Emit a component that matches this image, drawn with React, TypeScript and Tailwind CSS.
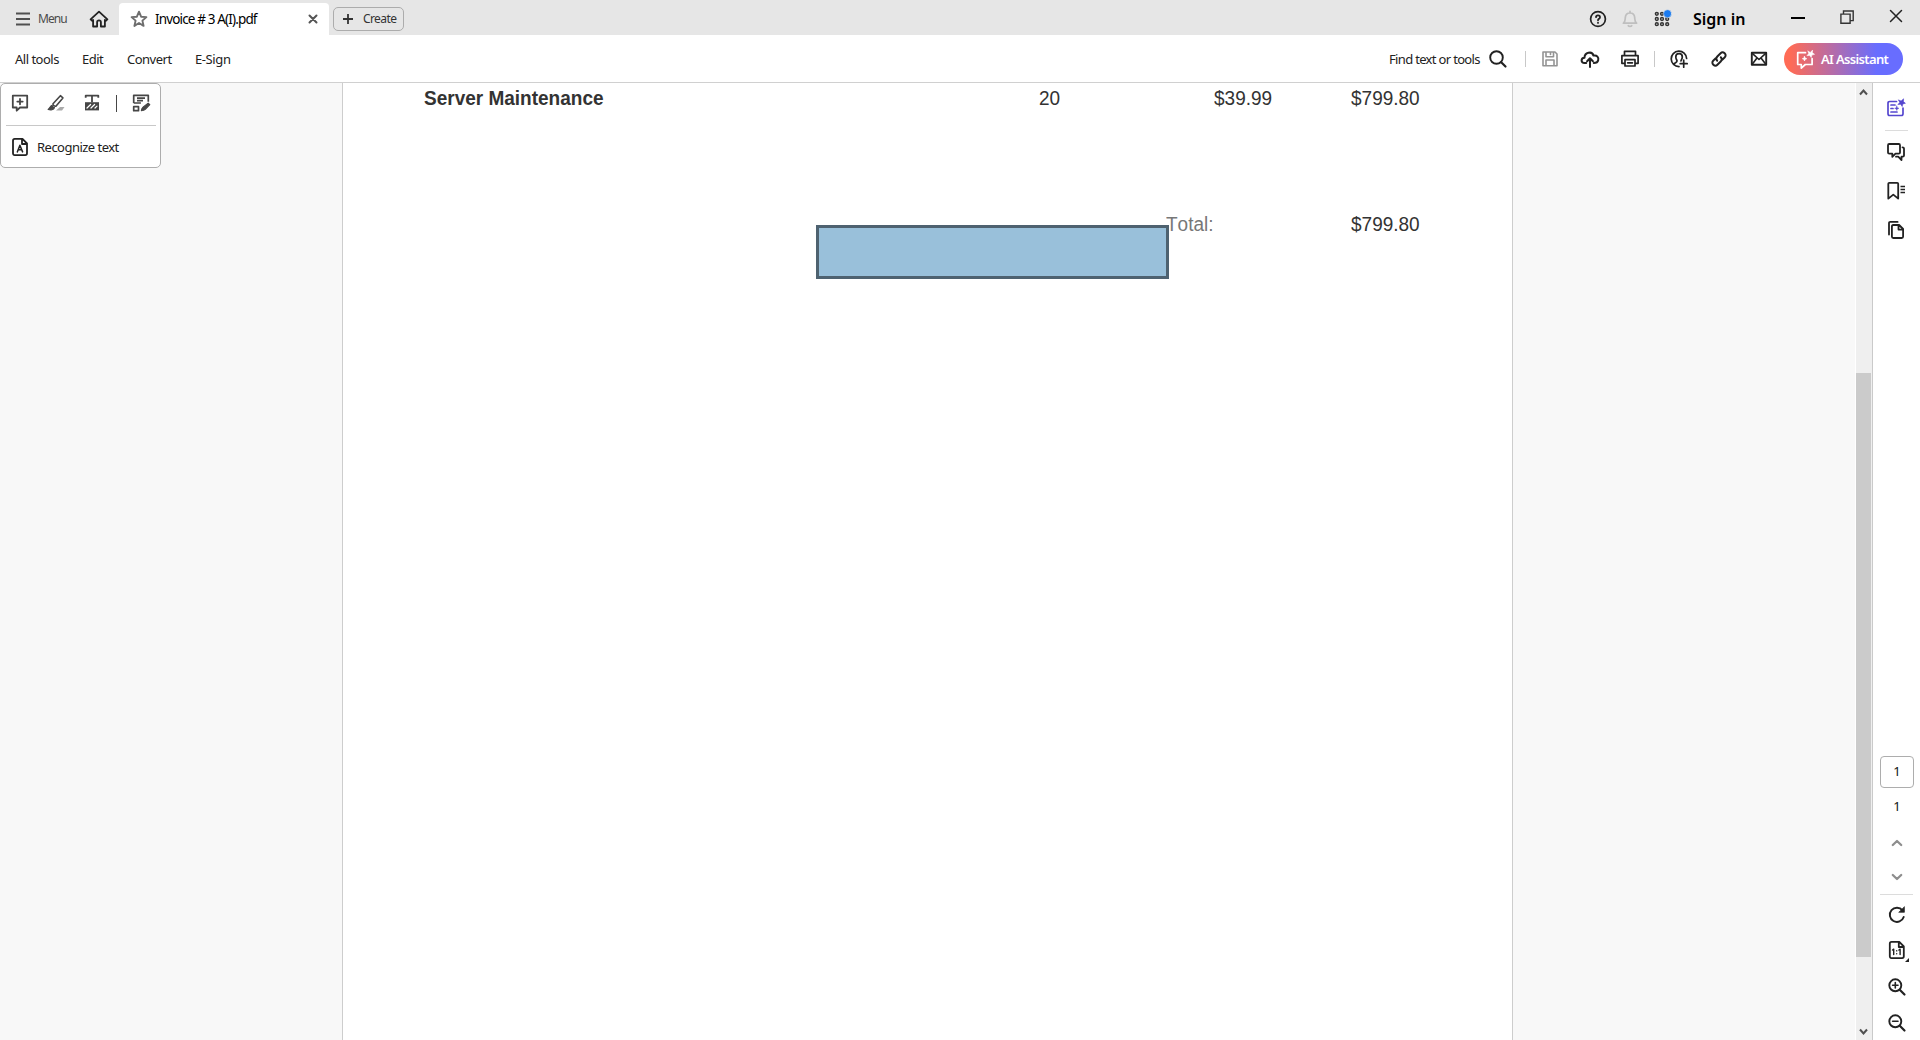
import React from 'react';

type IconProps = { children: React.ReactNode; className?: string };

/* 20px icon canvas, stroked with the current colour */
function Icon({ children, className = '' }: IconProps) {
  return (
    <svg
      viewBox="0 0 20 20"
      width="20"
      height="20"
      fill="none"
      stroke="currentColor"
      strokeWidth="1.7"
      strokeLinecap="round"
      strokeLinejoin="round"
      className={`block shrink-0 ${className}`}
    >
      {children}
    </svg>
  );
}

function TitleBar() {
  return (
    <header className="flex h-[35px] shrink-0 bg-[#e6e6e6]">
      <div className="flex items-center pt-[3px]">
        <Icon className="ml-[13px] text-[#505050]">
          <path d="M3 4.5h14M3 10h14M3 15.5h14" strokeLinecap="butt" strokeWidth="2" />
        </Icon>
        <span className="ml-[5px] w-[51px] text-[12px] leading-4 tracking-[-0.95px] text-[#4b4b4b]">Menu</span>
        <Icon className="-mt-px text-[#222]">
          <path d="M1.6 10.3 10 2.6l8.4 7.7-1.6 1.4-.9-.8v6.6h-4v-4.2a1.9 1.9 0 0 0-3.8 0v4.2h-4v-6.6l-.9.8z" strokeWidth="1.8" />
        </Icon>
      </div>
      <div className="mt-[3px] ml-[10px] flex h-8 w-[210px] items-center rounded-t-[4px] bg-white">
        <Icon className="ml-[10px] text-[#6e6e6e]">
          <path d="m10 2.7 2.1 5 5.3.4-4 3.5 1.2 5.3-4.6-2.9-4.6 2.9 1.2-5.3-4-3.5 5.3-.4z" strokeWidth="1.9" />
        </Icon>
        <span className="ml-[6px] w-[148px] text-[13.5px] leading-4 tracking-[-0.85px] whitespace-nowrap text-black">Invoice # 3 A(I).pdf</span>
        <Icon className="text-[#555]">
          <path d="m6.5 6.5 7 7m0-7-7 7" strokeWidth="2" />
        </Icon>
      </div>
      <button className="mt-[7px] ml-1 flex h-6 w-[71px] items-center rounded-[5px] border border-[#acacac]">
        <Icon className="ml-1 text-[#333]">
          <path d="M10 5v10M5 10h10" strokeLinecap="butt" strokeWidth="1.8" />
        </Icon>
        <span className="ml-[5px] text-[12px] leading-4 tracking-[-0.6px] text-[#333]">Create</span>
      </button>
      <div className="ml-auto flex items-center pt-[3px]">
        <Icon className="text-[#222]">
          <circle cx="10" cy="10" r="7.4" />
          <path d="M8 8.1c.1-2.4 4-2.3 4 .1 0 1.6-2 1.5-2 3.1M10 13.7v.2" strokeWidth="1.8" />
        </Icon>
        <Icon className="ml-[12px] text-[#bfbfbf]">
          <path d="M3.4 14.2c2-1.5 1.7-3.4 1.9-5.6.2-3 2-4.6 4.7-4.6s4.5 1.600 4.700 4.600c.2 2.200-.1 4.100 1.900 5.600zM10 2.300v1.500M8.300 16.700c.7 1 2.700 1 3.400 0" />
        </Icon>
        <Icon className="ml-[12px] text-[#333]">
          <g strokeWidth="1.5">
            {[4.8, 10, 15.2].map((y) =>
              [4.8, 10, 15.2].map((x) => <circle key={`${x}-${y}`} cx={x} cy={y} r="1.400" />),
            )}
          </g>
          <circle cx="15.500" cy="4.700" r="4" fill="#1a7bf0" stroke="#e6e6e6" strokeWidth=".6" />
        </Icon>
        <span className="ml-[21px] w-[95px] text-[16px] leading-5 font-semibold text-black">Sign in</span>
        <Icon className="-mt-[5px] text-black">
          <path d="M3 11h14" strokeLinecap="butt" strokeWidth="2" />
        </Icon>
        <Icon className="-mt-[5px] ml-[29px] text-[#333]">
          <path d="M3.900 7.100h9.200v9.200H3.900zM6.500 6.500V4h9.700v9.600h-2.700" strokeWidth="1.400" strokeLinejoin="miter" />
        </Icon>
        <Icon className="-mt-[6px] mr-[14px] ml-[29px] text-[#222]">
          <path d="m4.500 4.500 11 11m0-11-11 11" strokeWidth="1.500" />
        </Icon>
      </div>
    </header>
  );
}

function Toolbar() {
  return (
    <div className="flex h-12 shrink-0 items-center border-b border-[#d0d0d0] bg-white text-[13px] text-[#222]">
      <nav className="flex pt-[2px] tracking-[-0.5px]">
        <span className="ml-[15px] w-[67px]">All tools</span>
        <span className="w-[45px]">Edit</span>
        <span className="w-[68px]">Convert</span>
        <span className="tracking-[-0.4px]">E-Sign</span>
      </nav>
      <div className="ml-auto flex items-center">
        <span className="w-[99px] pt-[2px] tracking-[-0.67px] whitespace-nowrap">Find text or tools</span>
        <Icon>
          <circle cx="8.500" cy="8.500" r="6.300" strokeWidth="1.900" />
          <path d="m13.200 13.200 4.300 4.300" strokeWidth="2.200" />
        </Icon>
        <span className="ml-[17px] h-4 w-px bg-[#c8c8c8]" />
        <Icon className="ml-[14px] text-[#949494]">
          <path d="M3 3h12l2 2v11.800H3zM6 3v4.800h7.500V3M6 16.500V11h8v5.500M10.500 4v1.500" strokeWidth="1.600" />
        </Icon>
        <Icon className="ml-5">
          <path d="M6.200 14H4.500C.8 14 .5 9 4.500 8.800 4.500 3.500 12 1.600 13.500 6.600c3.500-.7 5.500 1.800 4.700 4.600-.4 1.800-1.600 2.800-4.400 2.800" strokeWidth="2" />
          <path d="M10 18v-8.400m-2.900 2.700L10 9.300l2.900 3" strokeWidth="2" />
        </Icon>
        <Icon className="ml-5">
          <path d="M4.500 14.300H1.900V6.700h16.200v7.600h-2.600M4.500 6.500V2.300h11v4.200M5 10.700h10V17H5zM7.700 13.800h4.700" strokeWidth="1.700" />
        </Icon>
        <span className="ml-[14px] h-4 w-px bg-[#c8c8c8]" />
        <Icon className="ml-[14px]">
          <path d="M17.600 9.500A7.700 7.700 0 1 0 10 17.600M5 15.200c.5-1.400 3-1.800 3-3.300 0-1-1.200-1.700-1.200-4 0-4.300 6.500-4.300 6.500 0 0 1.900-1 2.800-1.300 4M14.700 11.200v7M11.200 14.700h7" strokeWidth="1.700" />
        </Icon>
        <Icon className="ml-5">
          <path d="M8.200 11.800c-1.300-1.300-1.200-3 .1-4.300l3.300-3.300c2.600-2.600 6.800 1.500 4.200 4.100L13.500 10.600M11.800 8.200c1.300 1.300 1.200 3-.1 4.300l-3.300 3.300c-2.600 2.600-6.800-1.500-4.200-4.100L6.500 9.400" strokeWidth="2" />
        </Icon>
        <Icon className="ml-5">
          <path d="M2.800 3.800h14.400v11.900H2.800z" strokeWidth="1.900" />
          <path d="m3 4.200 7 6.300 7-6.300M3.200 15.300l4.600-6.100m9 6.100-4.600-6.100" strokeWidth="1.600" />
        </Icon>
        <button className="mr-[17px] ml-[15px] flex h-8 w-[119px] items-center rounded-full bg-[linear-gradient(90deg,#ff6b55_5%,#686dff_78%)] text-white">
          <Icon className="ml-[11px]">
            <path d="M10.500 3.700H2.700v11.800h3.600v3.600l4-3.600h6.800v-6" />
            <path d="m13 2 2.300 1.400L17.600 1l-.2 2.800 2.200 1.500-2.700.8-.7 2.500-1.500-2.200-2.800.3 1.700-2z" fill="currentColor" strokeWidth=".5" />
            <path d="m9.500 7.600.6 1.500 1.600.6-1.600.6-.6 1.600-.6-1.600-1.500-.6 1.500-.6z" fill="currentColor" strokeWidth=".8" />
          </Icon>
          <span className="ml-[6px] pt-px text-[13px] leading-4 font-semibold tracking-[-0.65px] whitespace-nowrap">AI Assistant</span>
        </button>
      </div>
    </div>
  );
}

function QuickTools() {
  return (
    <div className="absolute top-0 left-0 h-[85px] w-[161px] rounded-[5px] border border-[#adadad] bg-white text-[#464646]">
      <div className="flex h-[41px] items-center pb-[3px]">
        <Icon className="ml-[9px]">
          <path d="M2.800 2.700h14.400v11.800H10l-3.300 3.200v-3.200H2.800zM10 5.900v5.400M7.300 8.600h5.400" strokeWidth="1.800" />
        </Icon>
        <Icon className="ml-4">
          <path d="m10 17.500 4-3.600h4.500l-2.500 3.600z" fill="#aaa" stroke="none" />
          <path d="m7 10.700 7.400-8 2.500 2.200-7 8.300c-1.500.3-3.200-.8-2.900-2.500z" strokeWidth="1.600" />
          <path d="M6.200 12.300c-1.700.1-1.700 2-4 4.200 2.400.8 5.500.5 6.300-2" fill="currentColor" strokeWidth="1.200" />
        </Icon>
        <Icon className="ml-4">
          <path d="M3.700 4.800V2.600h12.600v2.200M10 3v6.300" strokeWidth="1.800" strokeLinecap="butt" />
          <path d="M3 9.200h14v8.200H3z" fill="currentColor" stroke="none" />
          <path d="m5 15 3.600-3.500M9 15l3.600-3.500m.4 3.500 2-1.900" stroke="#fff" strokeWidth="1.200" />
        </Icon>
        <span className="ml-[14px] h-[17px] w-px bg-[#464646]" />
        <Icon className="ml-[14px]">
          <path d="M2.700 10V2.300h14.600v6.500M2.700 10h7.200M6 5.200h8M6 7.700h6M2.700 13.700h4.800v4H2.700z" strokeWidth="1.700" strokeLinecap="butt" />
          <path d="M10.300 17.800c.3-2.700.9-3 2-3.900l4.900-3.800 1.600 1.600-4.500 4.600c-1.100 1-2.200 1.300-4 1.500z" fill="currentColor" strokeWidth="1.100" />
        </Icon>
      </div>
      <div className="mx-[5px] h-px w-[150px] bg-[#c8c8c8]" />
      <div className="flex h-[41px] items-center text-[#222]">
        <Icon className="ml-[9px]">
          <path d="M4.700 1.900h7.800L17 6.500v9.800c0 1.200-.6 1.800-1.700 1.800H4.700c-1.100 0-1.700-.6-1.700-1.800V3.700c0-1.200.6-1.800 1.700-1.800zM12 2.200V7h4.800" strokeWidth="1.800" />
          <path d="m7.300 14.900 2.600-6.600 2.700 6.600M8.300 12.800h3.400" strokeWidth="1.500" />
        </Icon>
        <span className="ml-[7px] text-[13px] leading-4 tracking-[-0.52px]">Recognize text</span>
      </div>
    </div>
  );
}

/* Document text is set slightly condensed */
function Cell({ children, className = '' }: IconProps) {
  return (
    <span className={`inline-block origin-left scale-x-95 whitespace-nowrap [font-kerning:none] ${className}`}>
      {children}
    </span>
  );
}

function InvoicePage() {
  return (
    <main className="relative ml-[342px] h-full w-[1171px] border-x border-[#cdcdcd] bg-white font-['Liberation_Sans',Arial,sans-serif] text-[20px] leading-[22px] text-[#333]">
      <div className="grid grid-cols-[615px_175px_137px_1fr] pt-[4px] pl-[81px]">
        <Cell className="font-bold">Server Maintenance</Cell>
        <Cell>20</Cell>
        <Cell>$39.99</Cell>
        <Cell>$799.80</Cell>
      </div>
      <div className="mt-[104px] flex">
        <Cell className="ml-[823px] w-[185px] text-[#777]">Total:</Cell>
        <Cell>$799.80</Cell>
      </div>
      <div className="absolute top-[142px] left-[473px] h-[54px] w-[353px] border-3 border-[#4e6270] bg-[#99c0da]" />
    </main>
  );
}

function Scrollbar() {
  return (
    <div className="flex w-[18px] shrink-0 flex-col items-start border-r border-l border-r-[#cacaca] border-l-white bg-[#efefef] text-[#505050]">
      <svg width="15" height="17" fill="none" stroke="currentColor" strokeWidth="2">
        <path d="m4 11.500 3.500-4 3.500 4" />
      </svg>
      <div className="mt-[273px] h-[584px] w-[15px] bg-[#cbcbcb]" />
      <svg width="15" height="17" className="mt-auto" fill="none" stroke="currentColor" strokeWidth="2">
        <path d="m4 6.500 3.500 4 3.500-4" />
      </svg>
    </div>
  );
}

function Magnifier({ plus = false }: { plus?: boolean }) {
  return (
    <>
      <circle cx="8.300" cy="8.300" r="6" strokeWidth="1.900" />
      <path d="m13 13 4.500 4.500" strokeWidth="2.200" />
      <path d={plus ? 'M5.600 8.300H11M8.300 5.600V11' : 'M5.600 8.300H11'} strokeWidth="1.600" />
    </>
  );
}

function SideRail() {
  return (
    <aside className="flex w-[47px] shrink-0 flex-col items-center bg-white text-[#222]">
      <Icon className="mt-[15px] mr-[2px] text-[#5547cf]">
        <path d="M10.500 3.500H3.700C2.500 3.500 2 4 2 5.200v10.600c0 1.200.5 1.700 1.700 1.700h11.600c1.200 0 1.700-.5 1.700-1.700V10M5 7h4M5 10.500h2M5 14h6" />
        <path d="m12.600 2 2.500 1L17.600.8l-.2 2.800 2 1.700-2.600.6-.6 2.600-1.500-2.200-2.800.2 1.800-1.900z" fill="currentColor" strokeWidth=".6" />
        <path d="m10.800 8 .6 1.700 1.600.6-1.600.6-.6 1.600-.6-1.600-1.600-.6 1.600-.6z" fill="currentColor" strokeWidth=".4" />
      </Icon>
      <div className="mt-3 h-px w-[23px] bg-[#dcdcdc]" />
      <Icon className="mt-[11px] mr-[2px]">
        <path d="M3.200 2h9.600c.8 0 1.200.4 1.200 1.200v7.200c0 .8-.4 1.200-1.200 1.200H9.500l-3.200 3.200v-3.200H3.200c-.8 0-1.200-.4-1.200-1.200V3.200C2 2.400 2.400 2 3.200 2z" strokeWidth="1.800" />
        <path d="M16.500 5.300c1 0 1.500.4 1.500 1.300v6.900c0 .8-.4 1.200-1.300 1.200h-1.200V18l-3.300-3.300H10" strokeWidth="1.800" />
      </Icon>
      <Icon className="mt-[19px] mr-[2px]">
        <path d="M3.300 1.800h7.900c.6 0 1 .4 1 1v14.800l-4.900-4-5 4V2.800c0-.6.400-1 1-1z" strokeWidth="1.800" />
        <path d="M14.500 5.500h4.500M14.500 8.500h4.500M14.500 11.500h4.500" strokeLinecap="butt" strokeWidth="1.500" />
      </Icon>
      <Icon className="mt-[19px] mr-[2px]">
        <path d="M3 14.500V3.300c0-1 .4-1.400 1.400-1.400h7.200" strokeWidth="1.800" />
        <path d="M7.300 5h5.800l4 4v7.500c0 1-.4 1.500-1.400 1.500H7.300c-1 0-1.400-.5-1.400-1.500v-10C5.900 5.500 6.300 5 7.300 5zM12.500 5.200v4.400H17" strokeWidth="1.800" />
      </Icon>
      <div className="mt-auto flex h-8 w-[34px] items-center justify-center rounded-[4px] border border-[#adadad] pl-px text-[13px] text-[#111]">1</div>
      <span className="mt-[9px] pl-px text-[13px] leading-[18px] text-[#111]">1</span>
      <Icon className="mt-[18px] text-[#8e8e8e]">
        <path d="m5.800 12 4.200-4 4.200 4" strokeWidth="2.300" />
      </Icon>
      <Icon className="mt-[14px] text-[#8e8e8e]">
        <path d="m5.800 8 4.200 4 4.200-4" strokeWidth="2.300" />
      </Icon>
      <div className="mt-[7px] h-px w-[33px] bg-[#dcdcdc]" />
      <Icon className="mt-[10px]">
        <path d="M15.500 5.400A7.100 7.100 0 1 0 16.700 12" strokeWidth="1.900" />
        <path d="M17.400 2v5.300h-5.300z" fill="currentColor" strokeWidth=".7" />
      </Icon>
      <div className="relative mt-[15px]">
        <Icon>
          <path d="M4.500 1.900h7.800l4.500 4.600v9.800c0 1.200-.6 1.800-1.700 1.800H4.500c-1.100 0-1.700-.6-1.700-1.800V3.700c0-1.200.6-1.800 1.700-1.800zM11.800 2.200V7h4.700" strokeWidth="1.800" />
          <path d="m5.500 10 1.200-.8v5.300M11.900 10l1.200-.8v5.300M9.700 10.800v.1M9.700 13.700v.1" strokeWidth="1.400" />
        </Icon>
        <svg width="4" height="4" className="absolute top-[18px] left-[18px]"><path d="M4 0v4H0z" fill="#222" /></svg>
      </div>
      <Icon className="mt-[17px]"><Magnifier plus /></Icon>
      <Icon className="mt-4 mb-[7px]"><Magnifier /></Icon>
    </aside>
  );
}

export default function App() {
  return (
    <div className="flex h-[1040px] w-[1920px] flex-col overflow-hidden bg-white font-['Noto_Sans','Open_Sans',sans-serif]">
      <TitleBar />
      <Toolbar />
      <div className="flex min-h-0 flex-1">
        <div className="relative flex-1 bg-[#f8f8f8]">
          <InvoicePage />
          <QuickTools />
        </div>
        <Scrollbar />
        <SideRail />
      </div>
    </div>
  );
}
